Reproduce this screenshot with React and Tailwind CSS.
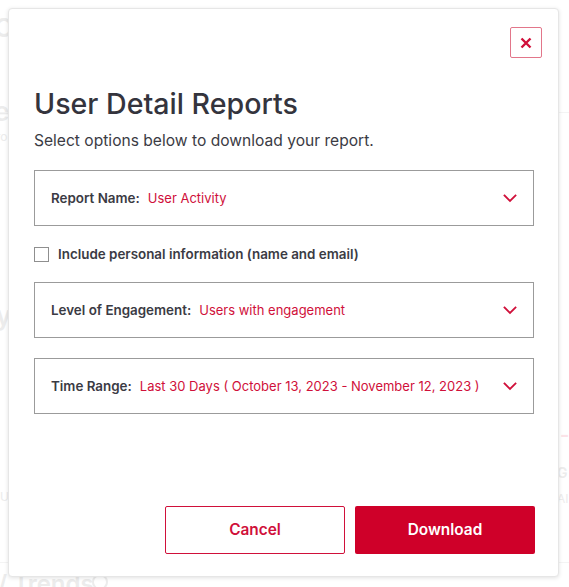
import { useState } from 'react'

const ChevronDown = () => (
    <svg width="14" height="9" viewBox="0 0 14 9" fill="none" className="shrink-0">
        <path d="M1.5 1.5L7 7L12.5 1.5" stroke="#d0103a" strokeWidth="1.8" strokeLinecap="square" />
    </svg>
)

const SelectBox = ({ label, value }) => (
    <div className="h-[56px] border border-[#9b9b9b] flex items-center justify-between pl-[16px] pr-[16px] cursor-pointer">
        <div className="flex items-baseline gap-[8px]">
            <span className="text-[13.4px] font-semibold text-[#3b3b44]">{label}</span>
            <span className="text-[13px] text-[#d0103a]">{value}</span>
        </div>
        <ChevronDown />
    </div>
)

const App = () => {
    const [includePersonal, setIncludePersonal] = useState(false)

    return (
        <div className="relative w-[569px] h-[587px] overflow-hidden bg-white" style={{ fontFamily: 'Inter, "Noto Sans", sans-serif' }}>
            {/* faded page behind the overlay */}
            <div className="absolute inset-0 text-[#ececec] select-none">
                <span className="absolute left-[-6px] top-[8px] text-[26px] font-semibold">C</span>
                <span className="absolute left-[-6px] top-[92px] text-[26px] font-semibold">e</span>
                <span className="absolute left-[-4px] top-[128px] text-[12px]">ro</span>
                <span className="absolute left-[-4px] top-[296px] text-[26px] font-semibold">y</span>
                <span className="absolute left-[0px] top-[488px] text-[12px]">U</span>
                <span className="absolute left-[-2px] top-[566px] text-[24px] font-semibold">/ Trends</span>
                <span className="absolute left-[92px] top-[574px] w-[16px] h-[16px] rounded-full border-2 border-[#ececec]"></span>
                <span className="absolute left-[560px] top-[420px] text-[20px] font-semibold text-[#fbe3e8]">-</span>
                <span className="absolute left-[557px] top-[462px] text-[14px] font-semibold">G</span>
                <span className="absolute left-[557px] top-[490px] text-[12px]">AI</span>
                <div className="absolute left-0 right-0 top-[112px] h-px bg-[#f4f4f4]"></div>
                <div className="absolute left-0 right-0 top-[562px] h-px bg-[#f4f4f4]"></div>
            </div>

            {/* Modal */}
            <div className="absolute left-[8px] top-[8px] w-[551px] h-[569px] bg-white rounded-[4px] border border-[#e6e6e6] shadow-[0_1px_4px_rgba(0,0,0,0.12)] flex flex-col pl-[25px] pr-[24px] pt-[18px] pb-[22px]">
                <div className="flex justify-end -mr-[8px]">
                    <button className="w-[32px] h-[31px] border border-[#e2768a] rounded-[2px] flex items-center justify-center">
                        <svg width="12" height="12" viewBox="0 0 12 12">
                            <path d="M1.5 1.5L10.5 10.5M10.5 1.5L1.5 10.5" stroke="#d0103a" strokeWidth="2.4" />
                        </svg>
                    </button>
                </div>

                <h1 className="mt-[29px] text-[28.6px] leading-[34px] font-medium text-[#34343d]">User Detail Reports</h1>
                <p className="mt-[9px] text-[15.6px] leading-[22px] text-[#3b3b44]">Select options below to download your report.</p>

                <div className="mt-[18px]">
                    <SelectBox label="Report Name:" value="User Activity" />
                </div>

                <label className="mt-[18px] flex items-center gap-[9px] cursor-pointer">
                    <span
                        onClick={() => setIncludePersonal(!includePersonal)}
                        className={`w-[15px] h-[15px] border ${includePersonal ? 'bg-[#d0103a] border-[#d0103a]' : 'bg-white border-[#8f8f8f]'}`}
                    ></span>
                    <span className="text-[13.4px] font-semibold text-[#3b3b44]">Include personal information (name and email)</span>
                </label>

                <div className="mt-[18px]">
                    <SelectBox label="Level of Engagement:" value="Users with engagement" />
                </div>

                <div className="mt-[20px]">
                    <SelectBox label="Time Range:" value="Last 30 Days ( October 13, 2023 - November 12, 2023 )" />
                </div>

                <div className="mt-auto flex justify-end gap-[10px] -mr-[1px]">
                    <button className="w-[180px] h-[48px] border border-[#d0103a] rounded-[2px] text-[#d0103a] text-[15.4px] font-semibold bg-white">
                        Cancel
                    </button>
                    <button className="w-[180px] h-[48px] bg-[#cf0029] rounded-[2px] text-white text-[15.4px] font-semibold">
                        Download
                    </button>
                </div>
            </div>
        </div>
    )
}

export default App
